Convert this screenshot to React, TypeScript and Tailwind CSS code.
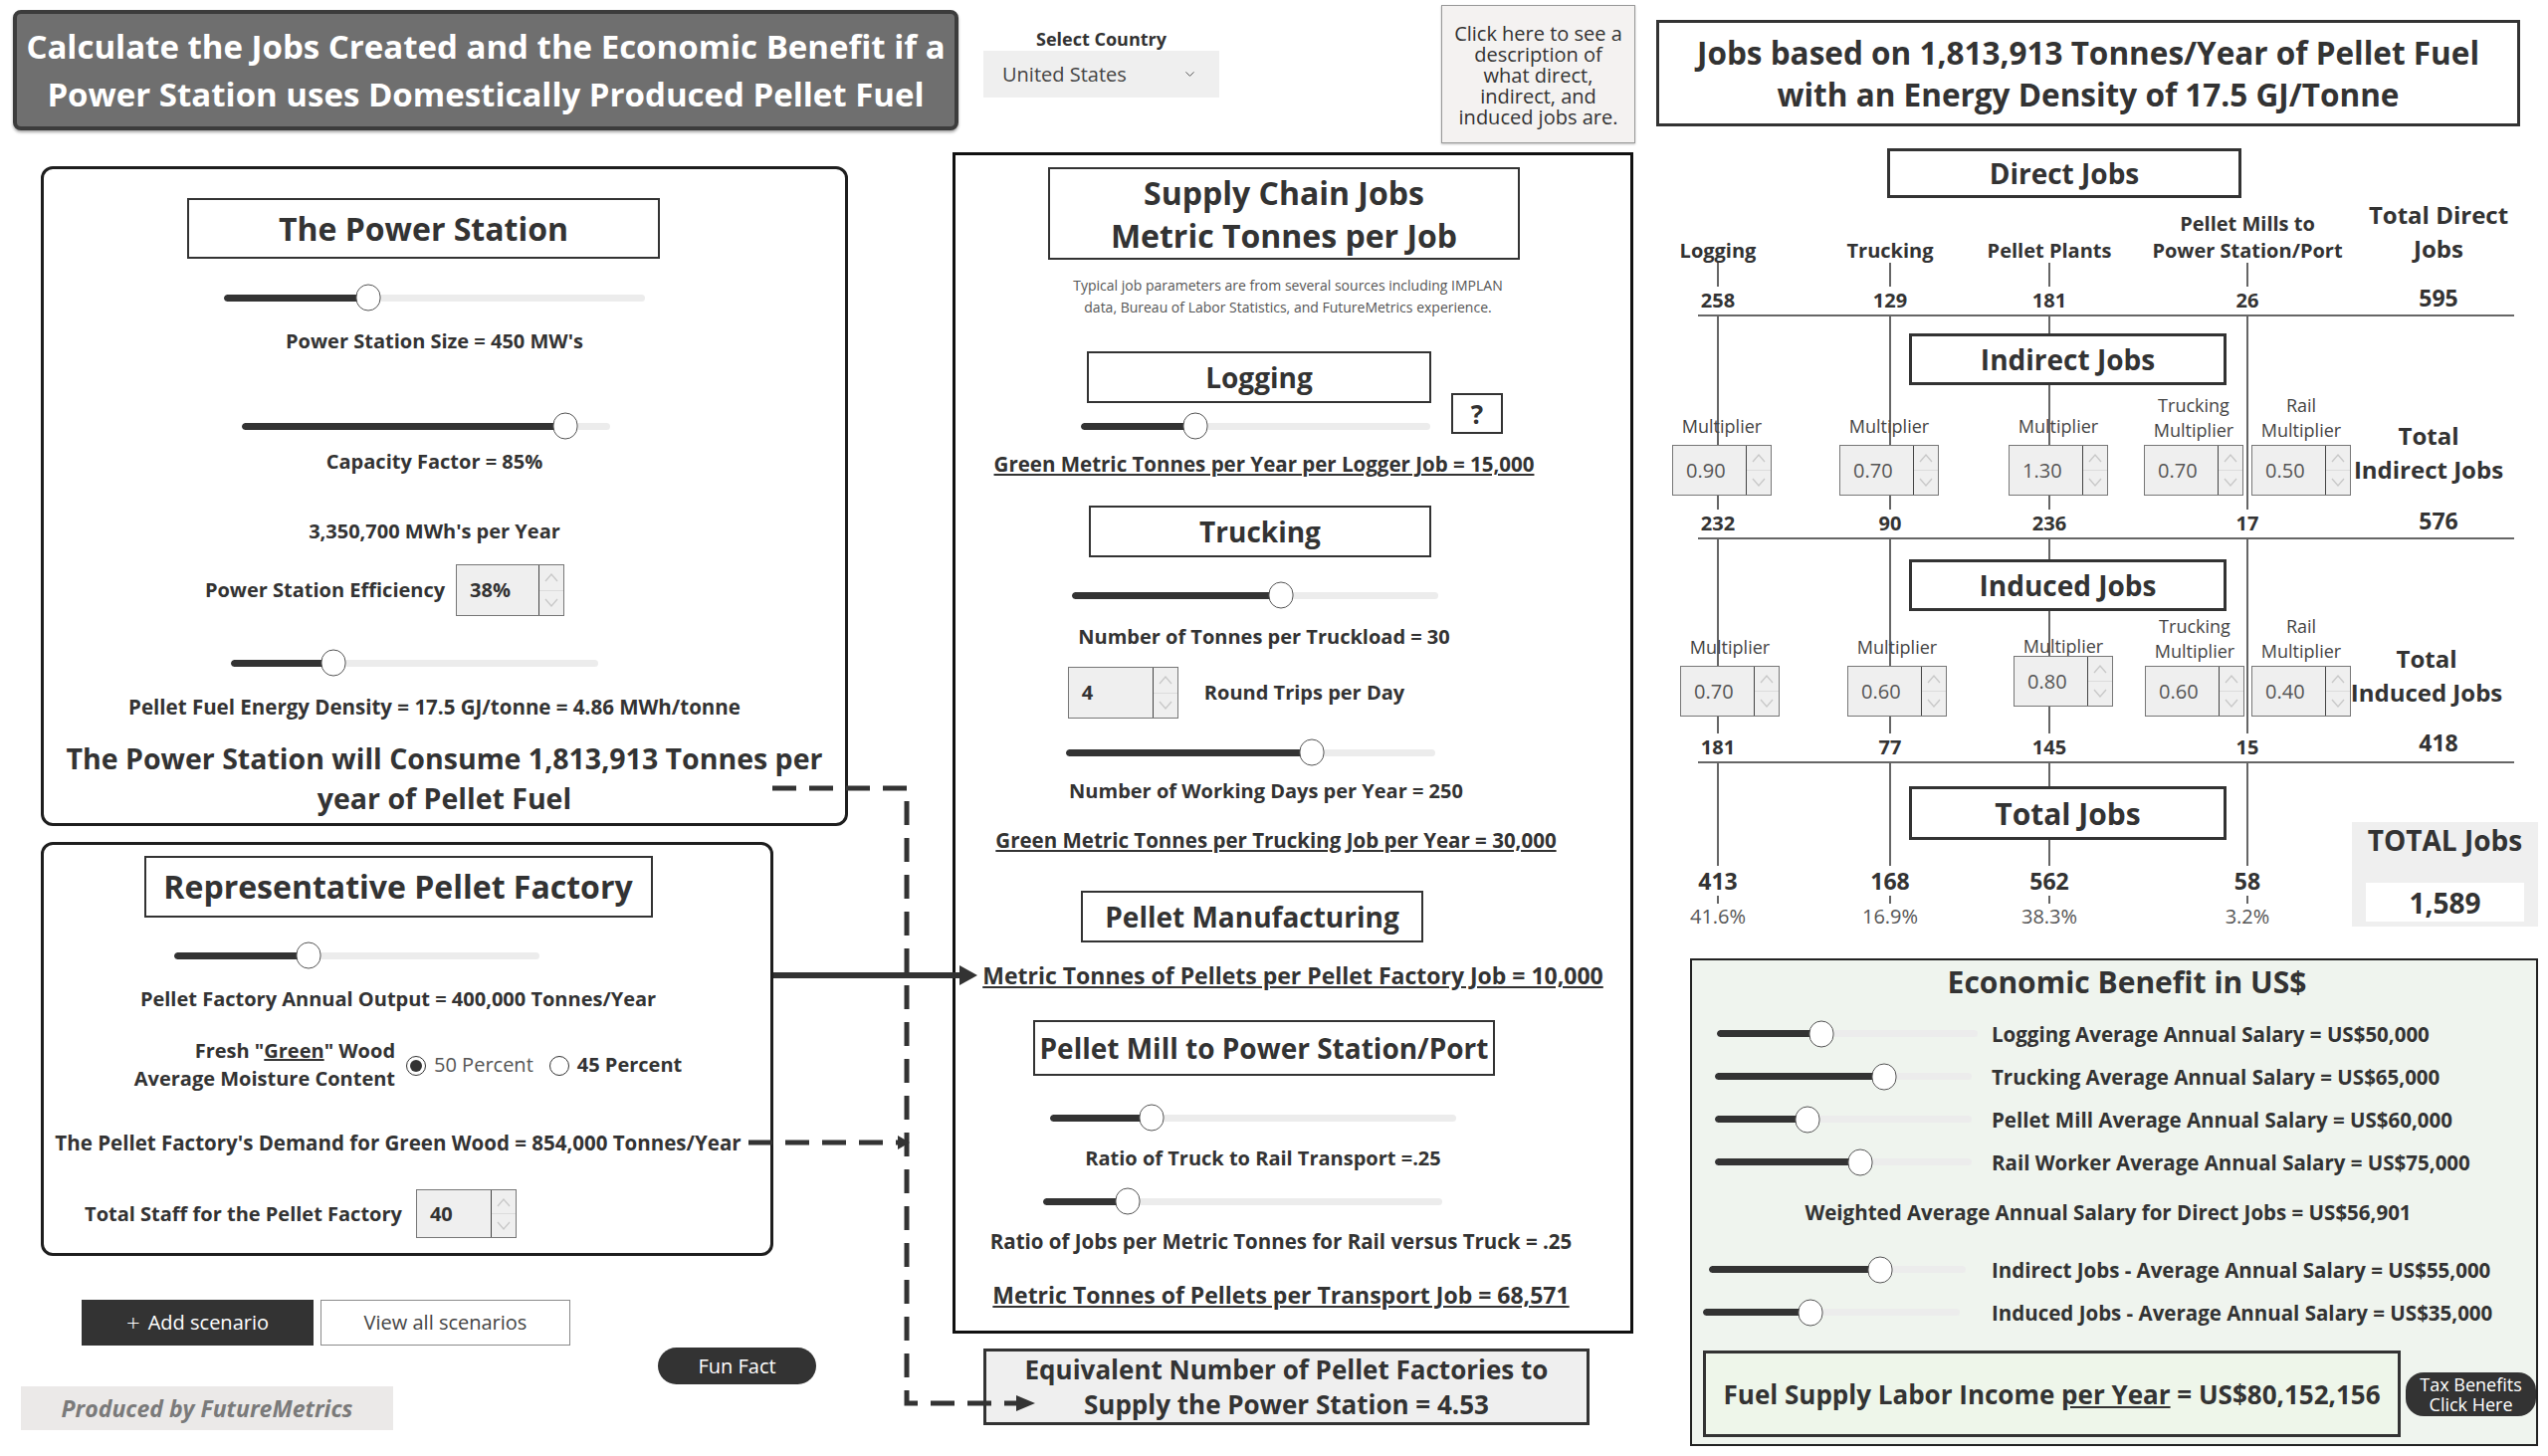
import React from "react";
import { ChevronDown } from "lucide-react";

const Chev = ({ up }: { up?: boolean }) => (
  <svg width="16" height="10" viewBox="0 0 16 10">
    <polyline
      points={up ? "2,9 8,2 14,9" : "2,1 8,8 14,1"}
      fill="none"
      stroke="#c8c8c8"
      strokeWidth="1.3"
    />
  </svg>
);

// number box with the little up/down spinner on the right
const Spin = ({
  value,
  className,
  bold,
}: {
  value: string;
  className: string;
  bold?: boolean;
}) => (
  <div className={`flex shrink-0 border border-[#777] bg-[#efefef] ${className}`}>
    <div
      className={`flex-1 flex items-center pl-[13px] text-[20px] ${
        bold ? "font-bold text-[#333]" : "font-normal text-[#555]"
      }`}
    >
      {value}
    </div>
    <div className="w-[25px] border-l border-[#444] flex flex-col">
      <div className="flex-1 flex items-center justify-center border-b border-[#dcdcdc]">
        <Chev up />
      </div>
      <div className="flex-1 flex items-center justify-center">
        <Chev />
      </div>
    </div>
  </div>
);

const Slider = ({ pct, className }: { pct: number; className: string }) => (
  <div className={`relative h-[28px] flex items-center shrink-0 ${className}`}>
    <div className="w-full h-[7px] rounded-full bg-[#ececec] overflow-hidden">
      <div className="h-full bg-[#333] rounded-full" style={{ width: `${pct}%` }} />
    </div>
    <div
      className="absolute top-1/2 w-[25px] h-[27px] -translate-x-1/2 -translate-y-1/2 rounded-full bg-white border-[1.5px] border-[#555]"
      style={{ left: `${pct}%` }}
    />
  </div>
);

const TitleBox = ({
  children,
  className,
}: {
  children: React.ReactNode;
  className: string;
}) => (
  <div
    className={`shrink-0 border-[2px] border-[#333] bg-white flex flex-col items-center justify-center text-center font-bold text-[#333] whitespace-nowrap ${className}`}
  >
    {children}
  </div>
);

const Cells = ({ widths, children }: { widths: string[]; children: React.ReactNode[] }) => (
  <>
    {children.map((c, i) => (
      <div key={i} className={`${widths[i]} shrink-0 flex justify-center`}>
        {c}
      </div>
    ))}
  </>
);

const Radio = ({ on }: { on?: boolean }) => (
  <div className="w-[20px] h-[20px] rounded-full border-[1.5px] border-[#333] bg-white flex items-center justify-center shrink-0">
    {on && <div className="w-[12px] h-[12px] rounded-full bg-[#333]" />}
  </div>
);

const colW = ["w-[124px]", "w-[222px]", "w-[98px]", "w-[300px]", "w-[84px]"];
const indW = ["w-[132px]", "w-[204px]", "w-[136px]", "w-[136px]", "w-[80px]", "w-[176px]"];
const infW = ["w-[148px]", "w-[188px]", "w-[146px]", "w-[118px]", "w-[96px]", "w-[156px]"];

const Num = ({ v }: { v: string }) => (
  <span className="bg-white px-[3px] text-[20px] leading-[28px] font-bold">{v}</span>
);

const Mult = ({ label, value, two }: { label: React.ReactNode; value: string; two?: boolean }) => (
  <div className="flex flex-col items-center">
    <div
      className={`text-center text-[18px] text-[#444] whitespace-nowrap ${
        two ? "leading-[25px] mb-[2px]" : "leading-[24px] mb-[7px]"
      }`}
    >
      {label}
    </div>
    <Spin value={value} className="w-[100px] h-[51px]" />
  </div>
);

const Two = ({ a, b }: { a: string; b: string }) => (
  <>
    {a}
    <br />
    {b}
  </>
);

export default function App() {
  return (
    <div className="relative w-[2560px] h-[1463px] bg-white flex font-['Open_Sans',sans-serif] text-[#333] overflow-hidden">
      {/* left column */}
      <div className="w-[944px] ml-[13px] shrink-0 flex flex-col">
        <div className="mt-[10px] w-[950px] h-[121px] shrink-0 rounded-[8px] border-[4px] border-[#3c3c3c] bg-[#6f6f6f] shadow-[0_2px_3px_rgba(0,0,0,0.35)] flex flex-col items-center justify-center text-white font-bold text-[33px] leading-[48px] whitespace-nowrap">
          <div>Calculate the Jobs Created and the Economic Benefit if a</div>
          <div>Power Station uses Domestically Produced Pellet Fuel</div>
        </div>

        <div className="mt-[36px] ml-[28px] w-[811px] h-[663px] shrink-0 border-[3px] border-[#1e1e1e] rounded-[12px] flex flex-col items-center pr-[20px] font-bold text-[20px] leading-[28px] whitespace-nowrap">
          <TitleBox className="mt-[29px] w-[475px] h-[61px] mr-[22px] text-[32px]">The Power Station</TitleBox>
          <Slider pct={34.3} className="mt-[25px] w-[423px]" />
          <div className="mt-[16px]">Power Station Size = 450 MW's</div>
          <Slider pct={88} className="mt-[57px] w-[370px] mr-[18px]" />
          <div className="mt-[8px]">Capacity Factor = 85%</div>
          <div className="mt-[42px]">3,350,700 MWh's per Year</div>
          <div className="mt-[19px] h-[52px] mr-[100px] flex items-center">
            <span>Power Station Efficiency</span>
            <Spin value="38%" bold className="ml-[11px] w-[109px] h-[52px]" />
          </div>
          <Slider pct={28} className="mt-[33px] w-[369px] mr-[40px]" />
          <div className="mt-[16px] text-[20.5px]">Pellet Fuel Energy Density = 17.5 GJ/tonne = 4.86 MWh/tonne</div>
          <div className="mt-[18px] text-[28.5px] leading-[40px] text-center ml-[20px]">
            The Power Station will Consume 1,813,913 Tonnes per
            <br />
            year of Pellet Fuel
          </div>
        </div>

        <div className="mt-[16px] ml-[28px] w-[736px] h-[416px] shrink-0 border-[3px] border-[#1e1e1e] rounded-[12px] flex flex-col items-center pr-[18px] font-bold text-[20px] leading-[28px] whitespace-nowrap">
          <TitleBox className="mt-[11px] w-[511px] h-[62px] text-[32px]">Representative Pellet Factory</TitleBox>
          <Slider pct={36.8} className="mt-[24px] w-[367px] mr-[84px]" />
          <div className="mt-[16px]">Pellet Factory Annual Output = 400,000 Tonnes/Year</div>
          <div className="mt-[24px] ml-[20px] flex items-center">
            <div className="text-right">
              Fresh "<span className="underline">Green</span>" Wood
              <br />
              Average Moisture Content
            </div>
            <div className="ml-[11px] mt-[2px]">
              <Radio on />
            </div>
            <span className="ml-[8px] font-normal text-[#555]">50 Percent</span>
            <div className="ml-[16px] mt-[2px]">
              <Radio />
            </div>
            <span className="ml-[8px]">45 Percent</span>
          </div>
          <div className="mt-[36px] text-[20.5px]">
            The Pellet Factory's Demand for Green Wood = 854,000 Tonnes/Year
          </div>
          <div className="mt-[33px] h-[49px] mr-[196px] flex items-center">
            <span>Total Staff for the Pellet Factory</span>
            <Spin value="40" bold className="ml-[14px] w-[101px] h-[49px]" />
          </div>
        </div>

        <div className="mt-[44px] ml-[69px] flex text-[20px] whitespace-nowrap">
          <div className="w-[233px] h-[46px] bg-[#333] text-white flex items-center justify-center gap-[8px]">
            <span className="text-[24px] leading-none font-light">+</span>
            <span>Add scenario</span>
          </div>
          <div className="ml-[7px] w-[251px] h-[46px] border border-[#8a8a8a] bg-white text-[#444] flex items-center justify-center">
            View all scenarios
          </div>
        </div>
        <div className="mt-[2px] ml-[648px] w-[159px] h-[37px] rounded-full bg-[#333] text-white text-[20px] flex items-center justify-center">
          Fun Fact
        </div>
        <div className="mt-[2px] ml-[8px] w-[374px] h-[44px] bg-[#ebe9e8] text-[#7a7a7a] italic font-bold text-[23px] flex items-center justify-center whitespace-nowrap">
          Produced by FutureMetrics
        </div>
      </div>

      {/* middle column */}
      <div className="w-[707px] shrink-0 flex flex-col">
        <div className="h-[144px] flex items-start shrink-0">
          <div className="ml-[31px] mt-[27px] w-[237px] flex flex-col items-center">
            <div className="text-[18px] leading-[24px] font-bold">Select Country</div>
            <div className="w-[237px] h-[47px] bg-[#efefef] flex items-center justify-between pl-[19px] pr-[22px] text-[20px] text-[#444]">
              <span>United States</span>
              <ChevronDown size={15} strokeWidth={1.6} color="#555" />
            </div>
          </div>
          <div className="ml-[223px] mt-[5px] w-[195px] h-[139px] bg-[#f4f2f1] border border-[#9a9a9a] shadow-[0_1px_2px_rgba(0,0,0,0.25)] pt-[17px] flex flex-col items-center text-[20px] leading-[21px] text-[#333] whitespace-nowrap">
            <div>Click here to see a</div>
            <div>description of</div>
            <div>what direct,</div>
            <div>indirect, and</div>
            <div>induced jobs are.</div>
          </div>
        </div>

        <div className="mt-[9px] w-[684px] h-[1187px] shrink-0 border-[3px] border-[#111] flex flex-col items-center pr-[50px] font-bold text-[20px] leading-[28px] whitespace-nowrap">
          <TitleBox className="mt-[12px] w-[474px] h-[93px] ml-[32px] text-[32px] leading-[43px]">
            <div>Supply Chain Jobs</div>
            <div>Metric Tonnes per Job</div>
          </TitleBox>
          <div className="mt-[15px] ml-[40px] text-center font-normal text-[14px] leading-[22px] text-[#555]">
            Typical job parameters are from several sources including IMPLAN
            <br />
            data, Bureau of Labor Statistics, and FutureMetrics experience.
          </div>
          <div className="relative mt-[33px] ml-[-18px]">
            <TitleBox className="w-[346px] h-[52px] text-[28px]">Logging</TitleBox>
            <div className="absolute left-[366px] top-[42px] w-[52px] h-[41px] border-[2px] border-[#333] bg-white flex items-center justify-center text-[26px] font-bold">
              ?
            </div>
          </div>
          <Slider pct={33} className="mt-[9px] w-[351px] mr-[26px]" />
          <div className="mt-[10px] ml-[-8px] underline text-[20.5px]">
            Green Metric Tonnes per Year per Logger Job = 15,000
          </div>
          <TitleBox className="mt-[28px] w-[344px] h-[52px] mr-[16px] text-[28px]">Trucking</TitleBox>
          <Slider pct={57} className="mt-[24px] w-[368px] mr-[26px]" />
          <div className="mt-[14px] ml-[-8px]">Number of Tonnes per Truckload = 30</div>
          <div className="mt-[16px] h-[52px] mr-[64px] flex items-center">
            <Spin value="4" bold className="w-[111px] h-[52px]" />
            <span className="ml-[26px]">Round Trips per Day</span>
          </div>
          <Slider pct={66.6} className="mt-[20px] w-[371px] mr-[36px]" />
          <div className="mt-[11px] ml-[-4px]">Number of Working Days per Year = 250</div>
          <div className="mt-[21px] ml-[16px] underline text-[20.5px]">
            Green Metric Tonnes per Trucking Job per Year = 30,000
          </div>
          <TitleBox className="mt-[37px] w-[344px] h-[52px] mr-[32px] text-[28px]">
            Pellet Manufacturing
          </TitleBox>
          <div className="mt-[18px] ml-[50px] underline text-[23px] leading-[30px]">
            Metric Tonnes of Pellets per Pellet Factory Job = 10,000
          </div>
          <TitleBox className="mt-[30px] w-[464px] h-[56px] ml-[-8px] text-[28px]">
            Pellet Mill to Power Station/Port
          </TitleBox>
          <Slider pct={25} className="mt-[28px] w-[408px] mr-[30px]" />
          <div className="mt-[13px] ml-[-10px]">Ratio of Truck to Rail Transport =.25</div>
          <Slider pct={21.4} className="mt-[15px] w-[401px] mr-[52px]" />
          <div className="mt-[12px] ml-[26px] text-[20.5px]">
            Ratio of Jobs per Metric Tonnes for Rail versus Truck = .25
          </div>
          <div className="mt-[25px] ml-[26px] underline text-[23px] leading-[30px]">
            Metric Tonnes of Pellets per Transport Job = 68,571
          </div>
        </div>

        <div className="mt-[15px] ml-[31px] w-[609px] h-[77px] shrink-0 bg-[#efefef] border-[3px] border-[#333] flex flex-col items-center justify-center text-center font-bold text-[26px] leading-[35px] whitespace-nowrap">
          <div>Equivalent Number of Pellet Factories to</div>
          <div>Supply the Power Station = 4.53</div>
        </div>
      </div>

      {/* right column */}
      <div className="relative w-[886px] shrink-0">
        {/* connector lines of the jobs diagram */}
        <div className="absolute left-[61px] top-[264px] w-[2px] h-[646px] bg-[#666]" />
        <div className="absolute left-[234px] top-[264px] w-[2px] h-[646px] bg-[#666]" />
        <div className="absolute left-[394px] top-[264px] w-[2px] h-[646px] bg-[#666]" />
        <div className="absolute left-[593px] top-[264px] w-[2px] h-[646px] bg-[#666]" />

        <div className="relative z-10 flex flex-col">
          <TitleBox className="mt-[20px] w-[868px] h-[107px] border-[3px] text-[31.5px] leading-[42px]">
            <div>Jobs based on 1,813,913 Tonnes/Year of Pellet Fuel</div>
            <div>with an Energy Density of 17.5 GJ/Tonne</div>
          </TitleBox>
          <TitleBox className="mt-[22px] ml-[232px] w-[356px] h-[50px] border-[3px] text-[28px]">
            Direct Jobs
          </TitleBox>

          <div className="h-[66px] flex items-end font-bold text-[20px] leading-[26px] whitespace-nowrap">
            <Cells widths={colW}>
              {[
                <span key="a">Logging</span>,
                <span key="b">Trucking</span>,
                <span key="c">Pellet Plants</span>,
                <span key="d" className="text-center leading-[27px]">
                  <Two a="Pellet Mills to" b="Power Station/Port" />
                </span>,
                <span key="e" className="text-center text-[24px] leading-[34px] mb-[-2px]">
                  <Two a="Total Direct" b="Jobs" />
                </span>,
              ]}
            </Cells>
          </div>
          <div className="h-[51px] flex items-end">
            <Cells widths={colW}>
              {[
                <Num key="a" v="258" />,
                <Num key="b" v="129" />,
                <Num key="c" v="181" />,
                <Num key="d" v="26" />,
                <span key="e" className="bg-white text-[23px] leading-[30px] font-bold mb-[2px]">
                  595
                </span>,
              ]}
            </Cells>
          </div>
          <div className="ml-[42px] w-[820px] h-[2px] bg-[#666]" />

          <TitleBox className="mt-[17px] ml-[254px] w-[319px] h-[52px] border-[3px] text-[28px]">
            Indirect Jobs
          </TitleBox>
          <div className="h-[111px] flex items-end">
            <Cells widths={indW}>
              {[
                <Mult key="a" label="Multiplier" value="0.90" />,
                <Mult key="b" label="Multiplier" value="0.70" />,
                <Mult key="c" label="Multiplier" value="1.30" />,
                <Mult key="d" two label={<Two a="Trucking" b="Multiplier" />} value="0.70" />,
                <Mult key="e" two label={<Two a="Rail" b="Multiplier" />} value="0.50" />,
                <div key="f" className="text-center font-bold text-[24px] leading-[34px] mb-[9px] whitespace-nowrap">
                  <Two a="Total" b="Indirect Jobs" />
                </div>,
              ]}
            </Cells>
          </div>
          <div className="h-[42px] flex items-end">
            <Cells widths={colW}>
              {[
                <Num key="a" v="232" />,
                <Num key="b" v="90" />,
                <Num key="c" v="236" />,
                <Num key="d" v="17" />,
                <span key="e" className="bg-white text-[23px] leading-[30px] font-bold mb-[2px]">
                  576
                </span>,
              ]}
            </Cells>
          </div>
          <div className="ml-[42px] w-[820px] h-[2px] bg-[#666]" />

          <TitleBox className="mt-[20px] ml-[254px] w-[319px] h-[52px] border-[3px] text-[28px]">
            Induced Jobs
          </TitleBox>
          <div className="h-[106px] flex items-end">
            <Cells widths={infW}>
              {[
                <Mult key="a" label="Multiplier" value="0.70" />,
                <Mult key="b" label="Multiplier" value="0.60" />,
                <div key="c" className="flex flex-col items-center">
                  <div className="text-[18px] leading-[24px] text-[#444] mb-[-2px]">Multiplier</div>
                  <Spin value="0.80" className="w-[100px] h-[51px] mb-[10px] border-[#333]" />
                </div>,
                <Mult key="d" two label={<Two a="Trucking" b="Multiplier" />} value="0.60" />,
                <Mult key="e" two label={<Two a="Rail" b="Multiplier" />} value="0.40" />,
                <div key="f" className="text-center font-bold text-[24px] leading-[34px] mb-[7px] whitespace-nowrap">
                  <Two a="Total" b="Induced Jobs" />
                </div>,
              ]}
            </Cells>
          </div>
          <div className="h-[45px] flex items-end">
            <Cells widths={colW}>
              {[
                <Num key="a" v="181" />,
                <Num key="b" v="77" />,
                <Num key="c" v="145" />,
                <Num key="d" v="15" />,
                <span key="e" className="bg-white text-[23px] leading-[30px] font-bold mb-[4px]">
                  418
                </span>,
              ]}
            </Cells>
          </div>
          <div className="ml-[42px] w-[820px] h-[2px] bg-[#666]" />

          <div className="h-[167px] flex">
            <div className="w-[699px] flex flex-col">
              <TitleBox className="mt-[23px] ml-[254px] w-[319px] h-[54px] border-[3px] text-[30px]">
                Total Jobs
              </TitleBox>
              <div className="mt-[26px] flex">
                <Cells widths={colW}>
                  {["413", "168", "562", "58"].map((v) => (
                    <span key={v} className="bg-white px-[3px] text-[23px] leading-[30px] font-bold">
                      {v}
                    </span>
                  ))}
                </Cells>
              </div>
              <div className="mt-[8px] flex">
                <Cells widths={colW}>
                  {["41.6%", "16.9%", "38.3%", "3.2%"].map((v) => (
                    <span key={v} className="bg-white px-[2px] text-[20px] leading-[26px] text-[#555]">
                      {v}
                    </span>
                  ))}
                </Cells>
              </div>
            </div>
            <div className="mt-[59px] w-[187px] h-[105px] bg-[#efefef] flex flex-col items-center">
              <div className="mt-[1px] text-[28px] leading-[34px] font-bold whitespace-nowrap">TOTAL Jobs</div>
              <div className="mt-[26px] w-[159px] h-[39px] bg-white flex items-center justify-center text-[28px] font-bold">
                1,589
              </div>
            </div>
          </div>

          <div className="mt-[29px] ml-[34px] w-[852px] h-[490px] border-[2px] border-[#222] bg-[#eff4ee] flex flex-col font-bold text-[20.5px] leading-[28px] whitespace-nowrap">
            <div className="mt-[2px] ml-[26px] text-center text-[30px] leading-[40px]">Economic Benefit in US$</div>
            <div className="mt-[10px] h-[43px] flex items-center">
              <div className="w-[301px] shrink-0">
                <Slider pct={40} className="ml-[25px] w-[262px]" />
              </div>
              <span>Logging Average Annual Salary = US$50,000</span>
            </div>
            <div className="h-[43px] flex items-center">
              <div className="w-[301px] shrink-0">
                <Slider pct={66} className="ml-[23px] w-[258px]" />
              </div>
              <span>Trucking Average Annual Salary = US$65,000</span>
            </div>
            <div className="h-[43px] flex items-center">
              <div className="w-[301px] shrink-0">
                <Slider pct={36} className="ml-[23px] w-[258px]" />
              </div>
              <span>Pellet Mill Average Annual Salary = US$60,000</span>
            </div>
            <div className="h-[43px] flex items-center">
              <div className="w-[301px] shrink-0">
                <Slider pct={56.5} className="ml-[23px] w-[258px]" />
              </div>
              <span>Rail Worker Average Annual Salary = US$75,000</span>
            </div>
            <div className="mt-[15px] mr-[12px] text-center">
              Weighted Average Annual Salary for Direct Jobs = US$56,901
            </div>
            <div className="mt-[22px] h-[43px] flex items-center">
              <div className="w-[301px] shrink-0">
                <Slider pct={66.8} className="ml-[17px] w-[258px]" />
              </div>
              <span>Indirect Jobs - Average Annual Salary = US$55,000</span>
            </div>
            <div className="h-[43px] flex items-center">
              <div className="w-[301px] shrink-0">
                <Slider pct={42} className="ml-[11px] w-[258px]" />
              </div>
              <span>Induced Jobs - Average Annual Salary = US$35,000</span>
            </div>
            <div className="mt-[17px] flex items-center">
              <div className="ml-[11px] w-[702px] h-[87px] border-[3px] border-[#333] bg-[#eef6ea] flex items-center justify-center text-[26px]">
                Fuel Supply Labor Income&nbsp;<span className="underline">per Year</span>&nbsp;= US$80,152,156
              </div>
              <div className="ml-[5px] w-[131px] h-[44px] rounded-[18px] bg-[#333] text-white flex flex-col items-center justify-center font-normal text-[18px] leading-[20px]">
                <span>Tax Benefits</span>
                <span>Click Here</span>
              </div>
            </div>
          </div>
        </div>
      </div>

      {/* flow arrows between the panels */}
      <svg
        className="absolute left-0 top-0 pointer-events-none z-20"
        width="2560"
        height="1463"
        viewBox="0 0 2560 1463"
      >
        <path
          d="M776 792 H911 V1410 H1022"
          fill="none"
          stroke="#333"
          strokeWidth="5"
          strokeDasharray="24 13"
        />
        <polygon points="1021,1402 1040,1410 1021,1418" fill="#333" />
        <path d="M752 1148 H903" fill="none" stroke="#333" strokeWidth="5" strokeDasharray="24 13" />
        <polygon points="902,1141 914,1148 902,1155" fill="#333" />
        <line x1="777" y1="980" x2="966" y2="980" stroke="#333" strokeWidth="6" />
        <polygon points="964,970 982,980 964,990" fill="#333" />
      </svg>
    </div>
  );
}
